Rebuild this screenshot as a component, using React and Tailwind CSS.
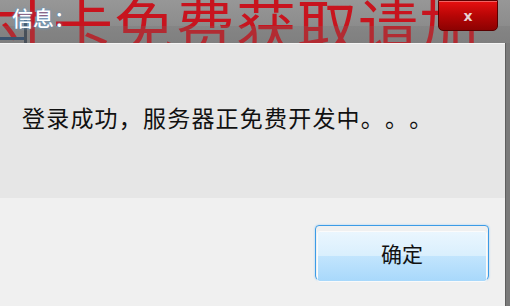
import React from "react";

const cjk = { fontFamily: '"Noto Sans CJK SC", "Noto Sans", sans-serif' };

const MessageBox = () => {
    return (
        <div className="w-[510px] h-[306px] flex flex-col overflow-hidden bg-[#7c7c7c]" style={cjk}>
            {/* title bar, with the page behind showing through */}
            <div className="relative h-[43px] shrink-0 bg-gradient-to-b from-[#979797] via-[#8e8e8e] to-[#858585] overflow-hidden">
                <div className="absolute left-[-8px] top-[-6px] text-[60px] leading-none whitespace-nowrap text-[#c8141e] tracking-[1px]">
                    寸卡免费获取请加
                </div>
                <div className="absolute left-0 top-[37px] w-[26px] h-[3px] bg-[#2a4a6e]" />
                <div className="absolute left-[24px] top-[20px] w-[3px] h-[23px] bg-[#3b4652]" />
                <div className="absolute left-0 right-0 top-[26px] h-[17px] bg-[#6e6e6e]/25" />
                <div className="relative pl-[12px] pt-[2px] text-[21px] font-medium text-white [text-shadow:0_0_3px_#6fa7d8,0_0_1px_#2b5d8a]">
                    信息：
                </div>
                <button className="absolute right-[12px] top-0 w-[60px] h-[31px] rounded-b-[5px] border border-[#5a0000] bg-gradient-to-b from-[#e81010] via-[#b70606] to-[#8c0202] flex items-center justify-center shadow-[inset_0_1px_0_rgba(255,255,255,0.35)]">
                    <span className="text-[14px] font-bold leading-none text-[#e8d0d0]" style={{ fontFamily: '"DejaVu Sans", sans-serif' }}>
                        x
                    </span>
                </button>
            </div>

            <div className="flex flex-1">
                <div className="w-[505px] flex flex-col border-t border-[#f4f4f4]">
                    <div className="h-[154px] bg-[#e6e6e6] pl-[22px] pt-[62px]">
                        <p className="text-[23px] leading-none text-[#111] tracking-[1.2px] [text-spacing-trim:space-all]">
                            登录成功，服务器正免费开发中。。。
                        </p>
                    </div>
                    <div className="flex-1 bg-[#f0f0f0] flex justify-end items-start pt-[27px] pr-[16px]">
                        <button className="w-[174px] h-[55px] rounded-[4px] border border-[#3c9be6] p-[1px] shadow-[0_0_2px_#8cc8f5]">
                            <div className="w-full h-full rounded-[3px] border border-white/70 flex flex-col overflow-hidden">
                                <div className="h-1/2 bg-gradient-to-b from-[#eaf6fe] to-[#d9effd]" />
                                <div className="h-1/2 bg-gradient-to-b from-[#c2e5fd] to-[#a8d8fb]" />
                            </div>
                            <span className="relative -mt-[50px] block text-[21px] leading-[43px] text-[#111]">确定</span>
                        </button>
                    </div>
                </div>
                <div className="flex-1 bg-[#7a7a7a] border-l border-[#5e5e5e]" />
            </div>
        </div>
    );
};

export default function App() {
    return <MessageBox />;
}
